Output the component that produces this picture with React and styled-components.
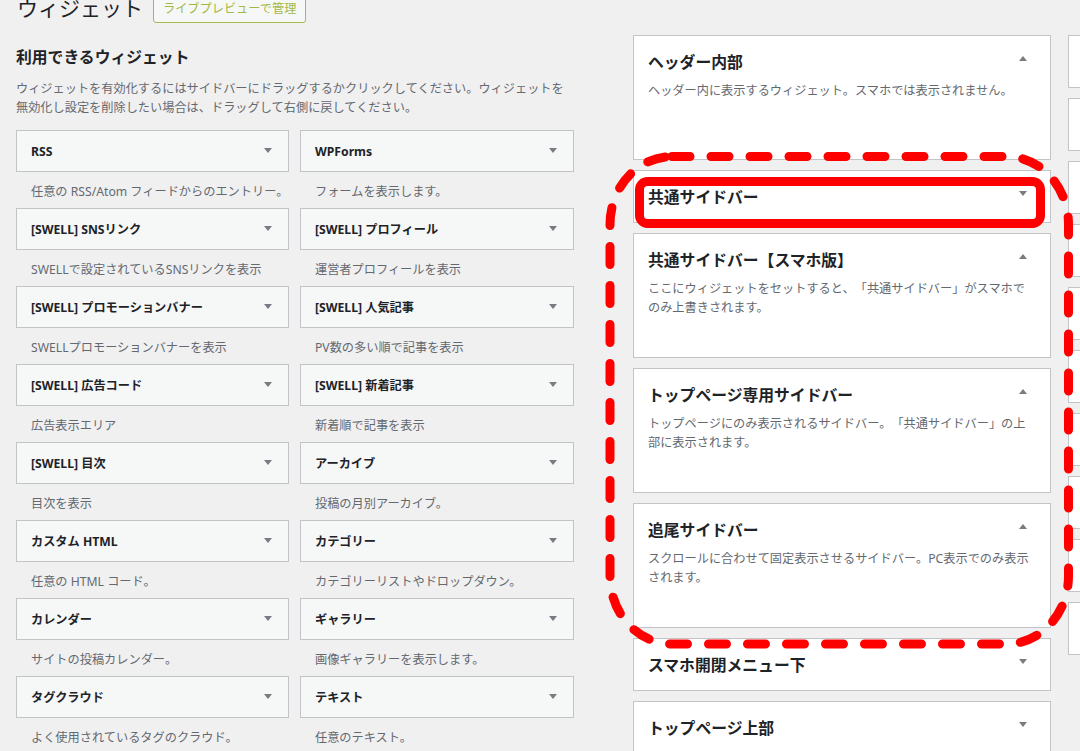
import React from 'react';
import styled, { createGlobalStyle } from 'styled-components';

const GlobalStyle = createGlobalStyle`
  html, body {
    margin: 0;
    padding: 0;
    background: #f0f0f1;
  }
  body {
    font-family: "Noto Sans", "Noto Sans CJK JP", sans-serif;
    color: #1d2327;
    overflow: hidden;
    text-spacing-trim: space-all;
  }
  * {
    box-sizing: border-box;
  }
`;

const widgets = [
  ['RSS', '任意の RSS/Atom フィードからのエントリー。'],
  ['WPForms', 'フォームを表示します。'],
  ['[SWELL] SNSリンク', 'SWELLで設定されているSNSリンクを表示'],
  ['[SWELL] プロフィール', '運営者プロフィールを表示'],
  ['[SWELL] プロモーションバナー', 'SWELLプロモーションバナーを表示'],
  ['[SWELL] 人気記事', 'PV数の多い順で記事を表示'],
  ['[SWELL] 広告コード', '広告表示エリア'],
  ['[SWELL] 新着記事', '新着順で記事を表示'],
  ['[SWELL] 目次', '目次を表示'],
  ['アーカイブ', '投稿の月別アーカイブ。'],
  ['カスタム HTML', '任意の HTML コード。'],
  ['カテゴリー', 'カテゴリーリストやドロップダウン。'],
  ['カレンダー', 'サイトの投稿カレンダー。'],
  ['ギャラリー', '画像ギャラリーを表示します。'],
  ['タグクラウド', 'よく使用されているタグのクラウド。'],
  ['テキスト', '任意のテキスト。'],
];

const sidebars = [
  { name: 'ヘッダー内部', open: true, desc: ['ヘッダー内に表示するウィジェット。スマホでは表示されません。'] },
  { name: '共通サイドバー', open: false },
  {
    name: '共通サイドバー【スマホ版】',
    open: true,
    desc: ['ここにウィジェットをセットすると、「共通サイドバー」がスマホで', 'のみ上書きされます。'],
  },
  {
    name: 'トップページ専用サイドバー',
    open: true,
    desc: ['トップページにのみ表示されるサイドバー。「共通サイドバー」の上', '部に表示されます。'],
  },
  {
    name: '追尾サイドバー',
    open: true,
    desc: ['スクロールに合わせて固定表示させるサイドバー。PC表示でのみ表示', 'されます。'],
  },
  { name: 'スマホ開閉メニュー下', open: false },
  { name: 'トップページ上部', open: false },
];

const App = () => {
  return (
    <>
      <GlobalStyle />
      <Page>
        <Header>
          <Title>ウィジェット</Title>
          <ActionButton>ライブプレビューで管理</ActionButton>
        </Header>
        <Columns>
          <Available>
            <AvailableTitle>利用できるウィジェット</AvailableTitle>
            <Intro>
              ウィジェットを有効化するにはサイドバーにドラッグするかクリックしてください。ウィジェットを
              <br />
              無効化し設定を削除したい場合は、ドラッグして右側に戻してください。
            </Intro>
            <WidgetGrid>
              {widgets.map(([name, desc]) => (
                <div key={name}>
                  <WidgetBox>
                    <WidgetName>{name}</WidgetName>
                    <Arrow />
                  </WidgetBox>
                  <WidgetDesc>{desc}</WidgetDesc>
                </div>
              ))}
            </WidgetGrid>
          </Available>

          <SidebarColumn>
            {sidebars.map((s) => (
              <SidebarBox key={s.name} $open={s.open}>
                <SidebarHead>
                  <SidebarName>{s.name}</SidebarName>
                  <Arrow $up={s.open} $side />
                </SidebarHead>
                {s.desc && (
                  <SidebarDesc>
                    {s.desc.map((line, i) => (
                      <React.Fragment key={i}>
                        {i > 0 && <br />}
                        {line}
                      </React.Fragment>
                    ))}
                  </SidebarDesc>
                )}
              </SidebarBox>
            ))}
          </SidebarColumn>

          <MoreColumn>
            {Array.from({ length: 10 }).map((_, i) => (
              <MoreBox key={i} />
            ))}
          </MoreColumn>
        </Columns>

        {/* red annotation marks drawn over the screenshot */}
        <Marks viewBox="0 0 1080 751" width="1080" height="751">
          <rect
            x="610"
            y="156.5"
            width="458.5"
            height="487.5"
            rx="62"
            ry="68"
            fill="none"
            stroke="#ff0000"
            strokeWidth="9"
            strokeLinecap="round"
            strokeDasharray="18 21"
          />
          <rect
            x="639.5"
            y="181.5"
            width="401"
            height="42"
            rx="8"
            fill="none"
            stroke="#ff0000"
            strokeWidth="9"
          />
        </Marks>
      </Page>
    </>
  );
};

const Page = styled.div`
  position: relative;
  width: 1080px;
  height: 751px;
  overflow: hidden;
  padding-left: 16px;
`;

const Header = styled.div`
  display: flex;
  align-items: center;
  gap: 10px;
  height: 30px;
  margin-top: -7px;
  margin-bottom: 12px;
`;

const Title = styled.h1`
  margin: 0;
  padding-left: 1px;
  font-size: 21px;
  font-weight: 400;
  line-height: 30px;
  color: #1d2327;
`;

const ActionButton = styled.a`
  display: inline-block;
  height: 29px;
  line-height: 27px;
  padding: 0 9px;
  border: 1px solid #a7b84f;
  border-radius: 3px;
  background: #f6f7f7;
  color: #a3b745;
  font-size: 12.2px;
`;

const Columns = styled.div`
  display: flex;
  align-items: flex-start;
`;

const Available = styled.section`
  flex: none;
  width: 558px;
  margin-right: 59px;
`;

const AvailableTitle = styled.h2`
  margin: 0;
  padding-top: 12px;
  font-size: 15.8px;
  font-weight: 700;
  line-height: 21px;
`;

const Intro = styled.p`
  margin: 10.5px 0 12.5px;
  font-size: 12.2px;
  line-height: 19.5px;
  color: #646970;
  white-space: nowrap;
`;

const WidgetGrid = styled.div`
  display: grid;
  grid-template-columns: 273px 274px;
  column-gap: 11px;
`;

const WidgetBox = styled.div`
  display: flex;
  align-items: center;
  justify-content: space-between;
  height: 42px;
  padding: 0 16px 0 14px;
  border: 1px solid #c3c4c7;
  background: #f6f7f7;
`;

const WidgetName = styled.span`
  font-size: 12.2px;
  font-weight: 700;
  color: #1d2327;
  white-space: nowrap;
`;

const Arrow = styled.span`
  flex: none;
  width: 0;
  height: 0;
  border-left: 4px solid transparent;
  border-right: 4px solid transparent;
  ${(p) => (p.$up ? 'border-bottom: 5px solid #787c82;' : 'border-top: 5px solid #787c82;')}
  margin-top: ${(p) => (p.$side ? '4.5px' : '-2px')};
  margin-right: ${(p) => (p.$side ? '8px' : '0')};
`;

const WidgetDesc = styled.div`
  padding: 10px 15px 6.5px;
  font-size: 12.2px;
  line-height: 19.5px;
  color: #646970;
  white-space: nowrap;
`;

const SidebarColumn = styled.div`
  flex: none;
  width: 418px;
  display: flex;
  flex-direction: column;
  gap: 10px;
`;

const SidebarBox = styled.div`
  min-height: ${(p) => (p.$open ? '125px' : '0')};
  padding: 15px 15px 14px 14px;
  border: 1px solid #c3c4c7;
  background: #fff;
`;

const SidebarHead = styled.div`
  display: flex;
  align-items: flex-start;
  justify-content: space-between;
`;

const SidebarName = styled.h2`
  margin: 0;
  font-size: 15.8px;
  font-weight: 700;
  line-height: 22px;
  white-space: nowrap;
`;

const SidebarDesc = styled.p`
  margin: 9px 0 0;
  font-size: 12.2px;
  line-height: 18.5px;
  color: #646970;
  white-space: nowrap;
`;

const MoreColumn = styled.div`
  flex: none;
  width: 300px;
  margin-left: 17px;
  display: flex;
  flex-direction: column;
  gap: 10px;
`;

const MoreBox = styled.div`
  height: 53px;
  border: 1px solid #c3c4c7;
  background: #fff;
`;

const Marks = styled.svg`
  position: absolute;
  top: 0;
  left: 0;
  pointer-events: none;
`;

export default App;
